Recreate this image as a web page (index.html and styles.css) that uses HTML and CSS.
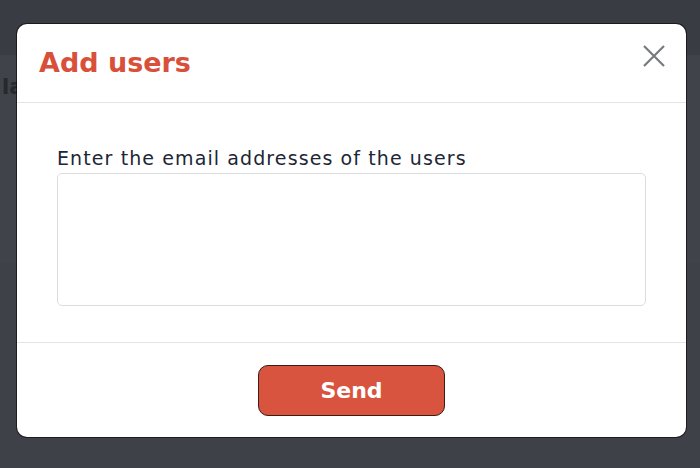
FILE: index.html
```html
<!DOCTYPE html>
<html lang="en">
<head>
<meta charset="utf-8">
<title>Add users</title>
<link rel="stylesheet" href="styles.css">
</head>
<body>
<div class="page">
  <div class="topbar"></div>
  <div class="panel"><span class="panel-text">lans</span></div>
  <div class="rest"></div>
</div>
<div class="backdrop">
  <div class="modal" role="dialog" aria-labelledby="modal-title">
    <div class="modal-header">
      <h2 id="modal-title" class="modal-title">Add users</h2>
      <button class="close" aria-label="Close">
        <svg width="24" height="24" viewBox="0 0 24 24"><path d="M2 2 L22 22 M22 2 L2 22" stroke="#777a7e" stroke-width="2.2" fill="none"/></svg>
      </button>
    </div>
    <div class="modal-body">
      <label class="label" for="emails">Enter the email addresses of the users</label>
      <textarea id="emails" class="emails"></textarea>
    </div>
    <div class="modal-footer">
      <button class="send">Send</button>
    </div>
  </div>
</div>
</body>
</html>
```
FILE: styles.css
```css
* { box-sizing: border-box; }
html, body { margin: 0; padding: 0; }
body {
  width: 700px;
  height: 468px;
  overflow: hidden;
  background: #3e4147;
  font-family: "DejaVu Sans", "Noto Sans", sans-serif;
  position: relative;
}
.page { display: flex; flex-direction: column; height: 100%; }
.topbar { height: 55px; background: #393c42; }
.panel {
  height: 207px;
  background: #404349;
  padding: 20px 0 0 2px;
}
.panel-text {
  font-size: 21px;
  color: #26292d;
  font-weight: 600;
}
.rest { flex: 1; background: #3e4147; }
.backdrop {
  position: absolute;
  inset: 0;
  padding: 24px 14px 31px 17px;
  display: flex;
}
.modal {
  flex: 1;
  background: #ffffff;
  border-radius: 10px;
  box-shadow: 0 0 0 1px rgba(0,0,0,0.55);
  display: flex;
  flex-direction: column;
  overflow: hidden;
}
.modal-header {
  height: 79px;
  border-bottom: 1px solid #e4e4e6;
  display: flex;
  align-items: center;
  justify-content: space-between;
  padding: 0 20px 2px 22px;
}
.modal-title {
  margin: 0;
  font-size: 27px;
  font-weight: 700;
  color: #d9503a;
}
.close {
  background: none;
  border: 0;
  padding: 0;
  width: 24px;
  height: 24px;
  margin-top: -12px;
  cursor: pointer;
}
.close svg { display: block; }
.modal-body {
  height: 240px;
  border-bottom: 1px solid #e4e4e6;
  padding: 40px 40px 36px 40px;
  display: flex;
  flex-direction: column;
}
.label {
  font-size: 19px;
  letter-spacing: 1.1px;
  color: #1d2636;
  line-height: 30px;
  margin-bottom: 0;
}
.emails {
  height: 133px;
  width: 589px;
  border: 1px solid #dcdcdf;
  border-radius: 5px;
  resize: none;
  font-family: inherit;
  font-size: 16px;
}
.modal-footer {
  flex: 1;
  display: flex;
  justify-content: center;
  align-items: center;
}
.send {
  width: 187px;
  height: 51px;
  background: #d9543f;
  border: 1px solid #3b1c16;
  border-radius: 10px;
  color: #ffffff;
  font-family: inherit;
  font-size: 22px;
  font-weight: 700;
}
```
